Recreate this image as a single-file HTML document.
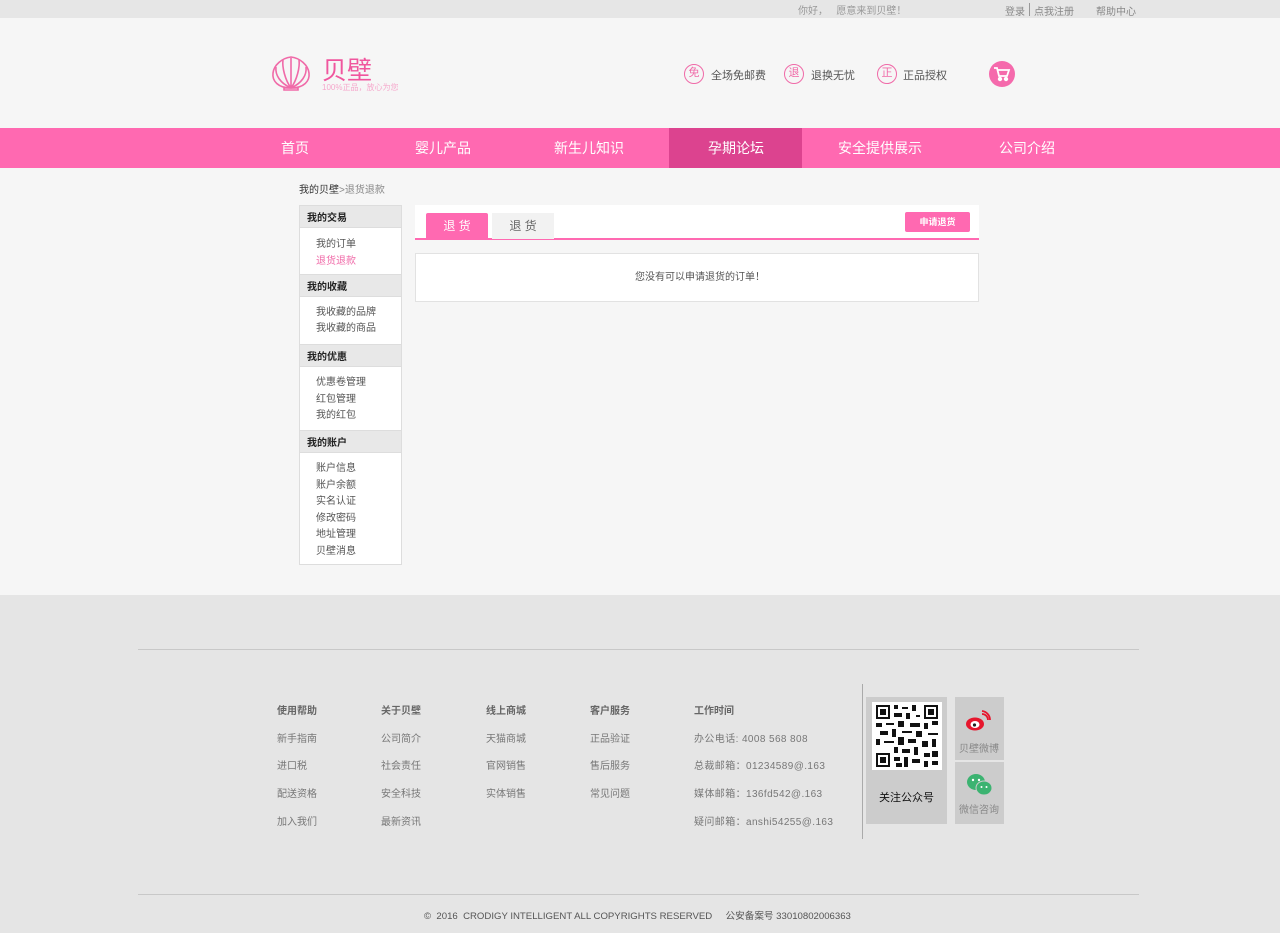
<!DOCTYPE html>
<html><head><meta charset="utf-8"><style>
*{margin:0;padding:0;box-sizing:border-box}
body{width:1280px;height:933px;position:relative;background:#f6f6f6;font-family:"Liberation Sans","Noto Sans CJK SC",sans-serif;overflow:hidden;color:#555}
.a{position:absolute;white-space:nowrap}
.s{font-size:10px}
</style></head><body>
<div class="a" style="left:0;top:0;width:1280px;height:18px;background:#e6e6e6"></div>
<div class="a s" style="left:798px;top:2px;color:#999">你好， &nbsp;&nbsp;愿意来到贝壁！</div>
<div class="a s" style="left:1005px;top:3px;color:#888">登录</div>
<div class="a" style="left:1029px;top:3px;width:1px;height:13px;background:#999"></div>
<div class="a s" style="left:1034px;top:3px;color:#888">点我注册</div>
<div class="a s" style="left:1096px;top:3px;color:#888">帮助中心</div>

<svg class="a" style="left:270px;top:55px" width="42" height="36" viewBox="0 0 42 36" fill="none" stroke="#f06aa8" stroke-width="1.6">
<path d="M21 33 C8 33 2 26 3 18 C4 10 12 3 21 2 C30 3 38 10 39 18 C40 26 34 33 21 33Z"/>
<path d="M21 33 L21 3 M21 33 C15 25 12 12 13 5 M21 33 C27 25 30 12 29 5 M21 33 C10 28 5 20 6 12 M21 33 C32 28 37 20 36 12"/>
<path d="M14 33 h14 v2 h-14z"/></svg>
<div class="a" style="left:322px;top:51px;font-size:25px;color:#f0569e">贝壁</div>
<div class="a" style="left:322px;top:82px;font-size:8px;color:#f5a8cc">100%正品，放心为您</div>

<div class="a" style="left:684px;top:64px;width:20px;height:20px;border:1.5px solid #f06aa8;border-radius:50%;font-size:11px;color:#f06aa8;text-align:center;line-height:17px">免</div>
<div class="a" style="left:711px;top:67px;font-size:11px;color:#555">全场免邮费</div>
<div class="a" style="left:784px;top:64px;width:20px;height:20px;border:1.5px solid #f06aa8;border-radius:50%;font-size:11px;color:#f06aa8;text-align:center;line-height:17px">退</div>
<div class="a" style="left:811px;top:67px;font-size:11px;color:#555">退换无忧</div>
<div class="a" style="left:877px;top:64px;width:20px;height:20px;border:1.5px solid #f06aa8;border-radius:50%;font-size:11px;color:#f06aa8;text-align:center;line-height:17px">正</div>
<div class="a" style="left:903px;top:67px;font-size:11px;color:#555">正品授权</div>
<div class="a" style="left:989px;top:61px;width:26px;height:26px;border-radius:50%;background:#f56aac"></div>
<svg class="a" style="left:993px;top:66px" width="18" height="16" viewBox="0 0 18 16" fill="none" stroke="#fff" stroke-width="1.8"><path d="M1 2h3l2 8h8l2-6H5"/><circle cx="7" cy="13" r="1.3" fill="#fff"/><circle cx="13" cy="13" r="1.3" fill="#fff"/></svg>

<div class="a" style="left:0;top:128px;width:1280px;height:40px;background:#ff69b1"></div>
<div class="a" style="left:669px;top:128px;width:133px;height:40px;background:#dc438f"></div>
<div class="a" style="left:0;top:138px;width:1280px;font-size:14px;color:#fff">
<span class="a" style="left:281px">首页</span><span class="a" style="left:415px">婴儿产品</span><span class="a" style="left:554px">新生儿知识</span><span class="a" style="left:708px">孕期论坛</span><span class="a" style="left:838px">安全提供展示</span><span class="a" style="left:999px">公司介绍</span></div>

<div class="a s" style="left:299px;top:181px;color:#333">我的贝壁<span style="color:#888">&gt;退货退款</span></div>

<div class="a" style="left:299px;top:205px;width:103px;height:360px;background:#fff;border:1px solid #ddd"></div>
<div class="a" style="left:299px;top:205px;width:103px;height:23px;background:#e8e8e8;border:1px solid #ddd"></div>
<div class="a" style="left:299px;top:274px;width:103px;height:23px;background:#e8e8e8;border:1px solid #ddd"></div>
<div class="a" style="left:299px;top:344px;width:103px;height:23px;background:#e8e8e8;border:1px solid #ddd"></div>
<div class="a" style="left:299px;top:430px;width:103px;height:23px;background:#e8e8e8;border:1px solid #ddd"></div>
<div class="a s" style="left:307px;top:209px;color:#222;font-weight:bold">我的交易</div>
<div class="a s" style="left:307px;top:278px;color:#222;font-weight:bold">我的收藏</div>
<div class="a s" style="left:307px;top:348px;color:#222;font-weight:bold">我的优惠</div>
<div class="a s" style="left:307px;top:434px;color:#222;font-weight:bold">我的账户</div>
<div class="a s" style="left:316px;top:237px;line-height:16.5px;color:#555">我的订单<br><span style="color:#f06aa8">退货退款</span></div>
<div class="a s" style="left:316px;top:305px;line-height:16px;color:#555">我收藏的品牌<br>我收藏的商品</div>
<div class="a s" style="left:316px;top:375px;line-height:16.5px;color:#555">优惠卷管理<br>红包管理<br>我的红包</div>
<div class="a s" style="left:316px;top:461px;line-height:16.5px;color:#555">账户信息<br>账户余额<br>实名认证<br>修改密码<br>地址管理<br>贝壁消息</div>

<div class="a" style="left:415px;top:205px;width:564px;height:35px;background:#fff;border-bottom:2px solid #ff69b1"></div>
<div class="a" style="left:426px;top:213px;width:62px;height:26px;background:#ff69b1;border-radius:2px 2px 0 0;color:#fff;font-size:12px;text-align:center;line-height:26px">退 货</div>
<div class="a" style="left:492px;top:213px;width:62px;height:26px;background:#f2f2f2;color:#666;font-size:12px;text-align:center;line-height:26px">退 货</div>
<div class="a" style="left:905px;top:212px;width:65px;height:20px;background:#ff69b1;border-radius:2px;color:#fff;font-size:9px;text-align:center;line-height:20px;font-weight:bold">申请退货</div>
<div class="a" style="left:415px;top:253px;width:564px;height:49px;background:#fff;border:1px solid #e2e2e2;font-size:10px;color:#555;text-align:center;line-height:47px;padding-left:6px">您没有可以申请退货的订单！</div>

<div class="a" style="left:0;top:595px;width:1280px;height:338px;background:#e5e5e5"></div>
<div class="a" style="left:138px;top:649px;width:1001px;height:1px;background:#c8c8c8"></div>
<div class="a" style="left:138px;top:894px;width:1001px;height:1px;background:#c8c8c8"></div>
<div class="a s" style="left:277px;top:698px;line-height:27.7px;color:#777"><b style="color:#666">使用帮助</b><br>新手指南<br>进口税<br>配送资格<br>加入我们</div>
<div class="a s" style="left:381px;top:698px;line-height:27.7px;color:#777"><b style="color:#666">关于贝壁</b><br>公司简介<br>社会责任<br>安全科技<br>最新资讯</div>
<div class="a s" style="left:486px;top:698px;line-height:27.7px;color:#777"><b style="color:#666">线上商城</b><br>天猫商城<br>官网销售<br>实体销售</div>
<div class="a s" style="left:590px;top:698px;line-height:27.7px;color:#777"><b style="color:#666">客户服务</b><br>正品验证<br>售后服务<br>常见问题</div>
<div class="a s" style="left:694px;top:698px;line-height:27.7px;color:#777"><b style="color:#666">工作时间</b><br><span style="letter-spacing:0.4px">办公电话: 4008 568 808<br>总裁邮箱：01234589@.163<br>媒体邮箱：136fd542@.163<br>疑问邮箱：anshi54255@.163</span></div>
<div class="a" style="left:862px;top:684px;width:1px;height:155px;background:#aaa"></div>
<div class="a" style="left:866px;top:697px;width:81px;height:127px;background:#ccc"></div>
<div class="a" style="left:872px;top:702px;width:70px;height:68px;background:#fff"></div>
<svg class="a" style="left:876px;top:705px" width="62" height="62" viewBox="0 0 31 31" shape-rendering="crispEdges">
<g fill="#111"><path d="M0 0h7v7h-7zM24 0h7v7h-7zM0 24h7v7h-7z"/></g>
<g fill="#fff"><path d="M1 1h5v5h-5zM25 1h5v5h-5zM1 25h5v5h-5z"/></g>
<g fill="#111"><path d="M2 2h3v3h-3zM26 2h3v3h-3zM2 26h3v3h-3z"/>
<path d="M9 0h2v2h-2zM13 1h3v1h-3zM18 0h2v3h-2zM9 4h4v2h-4zM15 4h2v3h-2zM20 5h2v1h-2zM0 9h3v2h-3zM5 9h4v1h-4zM11 8h3v3h-3zM17 9h5v2h-5zM24 9h2v3h-2zM28 8h3v2h-3zM2 13h4v2h-4zM8 12h2v4h-2zM13 13h5v1h-5zM20 13h3v3h-3zM26 14h5v1h-5zM0 17h2v3h-2zM4 18h5v1h-5zM11 16h3v4h-3zM16 17h4v2h-4zM23 18h3v3h-3zM28 17h2v4h-2zM9 21h2v3h-2zM13 22h4v2h-4zM19 21h2v4h-2zM9 26h3v2h-3zM14 26h2v5h-2zM18 27h4v2h-4zM24 24h3v2h-3zM28 23h3v3h-3zM24 28h2v3h-2zM28 28h3v2h-3zM10 29h3v2h-3z"/></g></svg>
<div class="a" style="left:866px;top:789px;width:81px;text-align:center;font-size:11px;color:#111">关注公众号</div>
<div class="a" style="left:955px;top:697px;width:49px;height:63px;background:#ccc"></div>
<div class="a" style="left:955px;top:762px;width:49px;height:62px;background:#ccc"></div>
<svg class="a" style="left:965px;top:710px" width="26" height="22" viewBox="0 0 26 22"><ellipse cx="10" cy="14" rx="9" ry="6.5" fill="#e6162d"/><ellipse cx="10" cy="14.5" rx="4.5" ry="3.5" fill="#fff"/><circle cx="9.5" cy="15" r="1.6" fill="#222"/><path d="M17 4a6 6 0 0 1 6 6M17 1a9 9 0 0 1 8 9" stroke="#e6162d" stroke-width="1.8" fill="none"/></svg>
<div class="a s" style="left:959px;top:740px;color:#888">贝壁微博</div>
<svg class="a" style="left:966px;top:773px" width="28" height="24" viewBox="0 0 28 24"><ellipse cx="10" cy="9" rx="9" ry="8" fill="#3cb371"/><ellipse cx="18" cy="15" rx="8" ry="7" fill="#3cb371" stroke="#ccc" stroke-width="1"/><circle cx="7" cy="7" r="1.2" fill="#fff"/><circle cx="13" cy="7" r="1.2" fill="#fff"/><circle cx="15.5" cy="14" r="1" fill="#fff"/><circle cx="20.5" cy="14" r="1" fill="#fff"/></svg>
<div class="a s" style="left:959px;top:801px;color:#888">微信咨询</div>

<div class="a" style="left:424px;top:908px;color:#555;font-size:9.6px">©&nbsp; 2016&nbsp; CRODIGY INTELLIGENT ALL COPYRIGHTS RESERVED &nbsp;&nbsp;&nbsp; 公安备案号 33010802006363</div>
</body></html>
